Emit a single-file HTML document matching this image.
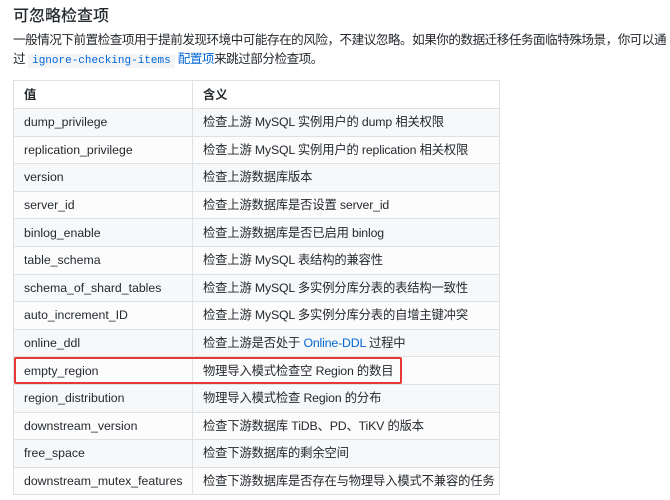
<!DOCTYPE html>
<html><head><meta charset="utf-8"><style>
body{margin:0;width:670px;height:500px;overflow:hidden;background:#fff;font-family:"Liberation Sans","Noto Sans CJK SC",sans-serif;color:#24292e}
h3{position:absolute;left:13px;top:6px;margin:0;font-size:16px;font-weight:500;line-height:22px}
p{position:absolute;left:13px;top:31px;width:680px;margin:0;font-size:12.6px;line-height:18.5px;letter-spacing:-0.5px;white-space:nowrap}
code{font-family:"Liberation Mono",monospace;font-size:11px;color:#0366d6;background:#f3f4f6;padding:1px 4px;letter-spacing:0}
a{color:#0366d6;text-decoration:none}
table{position:absolute;left:13px;top:80px;border-collapse:collapse;width:487px;font-size:12.3px;table-layout:fixed}
td,th{border:1px solid #dfe2e5;height:27.6px;padding:0 0 0 10px;text-align:left;box-sizing:border-box;line-height:16px;white-space:nowrap;vertical-align:middle;overflow:hidden}
th{font-weight:600;height:28px;background:#fff}
tr:nth-child(even) td{background:#f6f8fa}
tr:nth-child(odd) td{background:#fcfcfc}
td:first-child,th:first-child{width:179px}
td:last-child{letter-spacing:-0.15px}
.box{position:absolute;left:14px;top:357px;width:388px;height:27px;border:2px solid #e53935;border-radius:2px;box-sizing:border-box}
</style></head><body>
<h3>可忽略检查项</h3>
<p>一般情况下前置检查项用于提前发现环境中可能存在的风险，不建议忽略。如果你的数据迁移任务面临特殊场景，你可以通<br>过 <code>ignore-checking-items</code> <a>配置项</a>来跳过部分检查项。</p>
<table>
<tr><th>值</th><th>含义</th></tr>
<tr><td>dump_privilege</td><td>检查上游 MySQL 实例用户的 dump 相关权限</td></tr>
<tr><td>replication_privilege</td><td>检查上游 MySQL 实例用户的 replication 相关权限</td></tr>
<tr><td>version</td><td>检查上游数据库版本</td></tr>
<tr><td>server_id</td><td>检查上游数据库是否设置 server_id</td></tr>
<tr><td>binlog_enable</td><td>检查上游数据库是否已启用 binlog</td></tr>
<tr><td>table_schema</td><td>检查上游 MySQL 表结构的兼容性</td></tr>
<tr><td>schema_of_shard_tables</td><td>检查上游 MySQL 多实例分库分表的表结构一致性</td></tr>
<tr><td>auto_increment_ID</td><td>检查上游 MySQL 多实例分库分表的自增主键冲突</td></tr>
<tr><td>online_ddl</td><td>检查上游是否处于 <a>Online-DDL</a> 过程中</td></tr>
<tr><td>empty_region</td><td>物理导入模式检查空 Region 的数目</td></tr>
<tr><td>region_distribution</td><td>物理导入模式检查 Region 的分布</td></tr>
<tr><td>downstream_version</td><td>检查下游数据库 TiDB、PD、TiKV 的版本</td></tr>
<tr><td>free_space</td><td>检查下游数据库的剩余空间</td></tr>
<tr><td>downstream_mutex_features</td><td>检查下游数据库是否存在与物理导入模式不兼容的任务</td></tr>
</table>
<div class="box"></div>
</body></html>
